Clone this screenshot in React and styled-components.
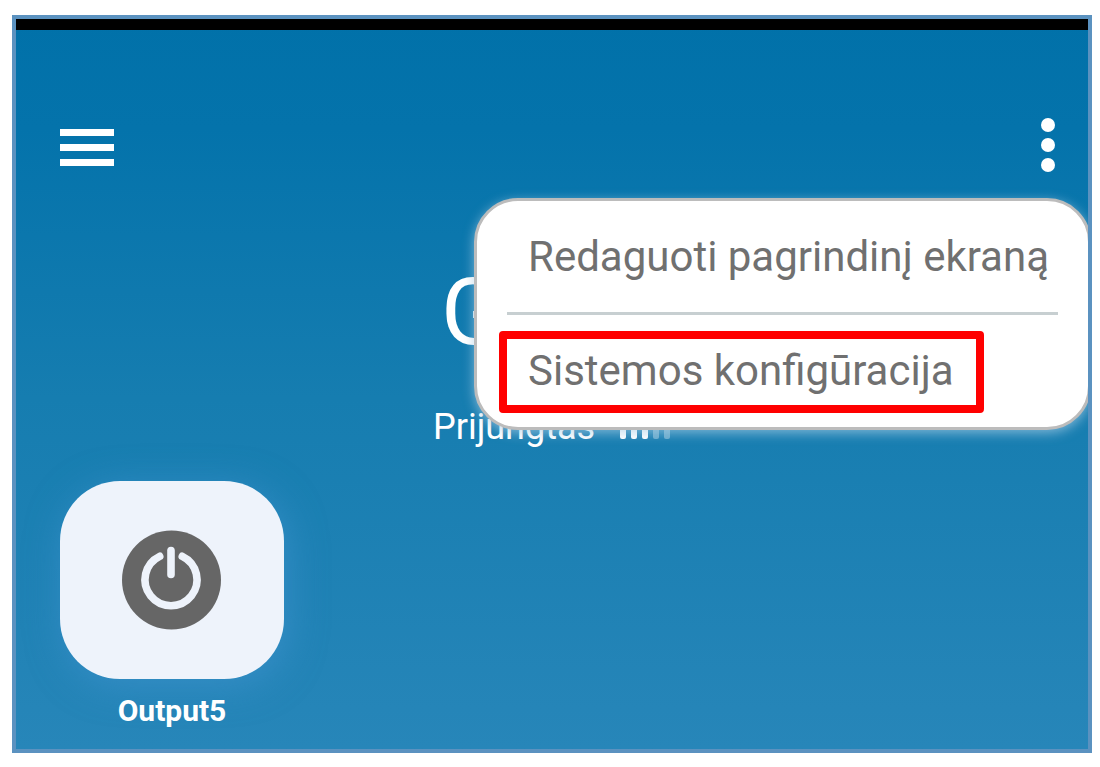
import React from "react";
import styled, { createGlobalStyle } from "styled-components";

const GlobalStyle = createGlobalStyle`
  * { box-sizing: border-box; }
  body { margin: 0; background: #fff; font-family: Roboto, sans-serif; }
  button { font: inherit; color: inherit; background: none; border: 0; padding: 0; cursor: pointer; }
`;

const Page = styled.div`
  min-height: 100vh;
  padding: 15px 8px 14px 12px;
  display: flex;
`;

const Screen = styled.main`
  flex: 1;
  position: relative;
  display: flex;
  flex-direction: column;
  overflow: hidden;
  border: 4px solid #5b92c0;
  color: #fff;
  background: linear-gradient(#0171a9 0%, #0473ab 15%, #167db0 52%, #2786b9 100%);
`;

const StatusBar = styled.div`
  height: 11px;
  flex: none;
  background: #000;
`;

const TopBar = styled.header`
  display: flex;
  justify-content: space-between;
  align-items: flex-start;
  padding: 88px 33px 0 44px;
`;

const MenuButton = styled.button`
  display: flex;
  flex-direction: column;
  gap: 8px;
  width: 54px;
  padding-top: 11px;
`;

const MenuLine = styled.span`
  height: 7px;
  background: #fff;
`;

const MoreButton = styled.button`
  display: flex;
  flex-direction: column;
  gap: 6px;
`;

const Dot = styled.span`
  width: 14px;
  height: 14px;
  border-radius: 50%;
  background: #fff;
`;

const Device = styled.section`
  display: flex;
  flex-direction: column;
  align-items: flex-start;
  width: 238px;
  margin: 87px auto 0;
`;

const DeviceName = styled.h1`
  margin: 0;
  padding-left: 8px;
  font-size: 92px;
  line-height: 108px;
  font-weight: 400;
`;

const Connection = styled.div`
  display: flex;
  align-items: center;
  gap: 24px;
  margin-top: 39px;
  font-size: 36px;
  line-height: 42px;
`;

const Signal = styled.svg`
  width: 54px;
  height: 24px;
`;

const Popover = styled.div`
  position: absolute;
  top: 179px;
  right: -3px;
  display: flex;
  flex-direction: column;
  padding: 20px 30px 14px;
  border: 3px solid #bcbcbc;
  border-radius: 44px;
  background: #fff;
  color: #707070;
  box-shadow: 0 3px 12px rgba(170, 205, 230, 0.7);
`;

const MenuItem = styled.button`
  align-self: flex-start;
  padding: 0 9px 0 21px;
  font-size: 42px;
  line-height: 72px;
  white-space: nowrap;
`;

const Divider = styled.hr`
  width: 100%;
  height: 3px;
  margin: 19px 0 16px;
  border: 0;
  background: #c7cfd1;
`;

const Highlight = styled.div`
  display: flex;
  align-self: flex-start;
  margin-left: -8px;
  border: 8px solid #f00;
  border-radius: 4px;

  ${MenuItem} {
    padding-right: 22px;
    padding-bottom: 2px;
    line-height: 64px;
  }
`;

const Outputs = styled.section`
  display: flex;
  padding: 33px 44px 20px;
`;

const Output = styled.button`
  display: flex;
  flex-direction: column;
  align-items: center;
  gap: 14px;
  font-size: 30px;
  line-height: 36px;
  font-weight: 700;
`;

const Tile = styled.span`
  display: grid;
  place-items: center;
  width: 224px;
  height: 198px;
  border-radius: 60px;
  background: #eef3fb;
  box-shadow: 4px 6px 36px rgba(66, 148, 208, 0.6);
`;

const PowerIcon = () => (
  <svg width="100" height="100" viewBox="0 0 100 100" aria-hidden="true">
    <circle cx="49.5" cy="50" r="49.5" fill="#666" />
    <g fill="none" stroke="#eef3fb" strokeWidth="7.6" strokeLinecap="round">
      <path d="M37.7 26.3A26 26 0 1 0 60.3 26.3" />
      <path d="M49 20.5V44.5" />
    </g>
  </svg>
);

const SignalIcon = () => (
  <Signal viewBox="0 0 54 24" aria-hidden="true">
    {[0, 11, 22, 33, 44].map((x, i) => (
      <rect key={x} x={x + 1} y={12 - i * 3} width="6" height={12 + i * 3} rx="2" fill="#fff" opacity={i < 3 ? 1 : 0.35} />
    ))}
  </Signal>
);

export default function App() {
  return (
    <Page>
      <GlobalStyle />
      <Screen>
        <StatusBar />
        <TopBar>
          <MenuButton aria-label="Meniu">
            <MenuLine />
            <MenuLine />
            <MenuLine />
          </MenuButton>
          <MoreButton aria-label="Daugiau">
            <Dot />
            <Dot />
            <Dot />
          </MoreButton>
        </TopBar>
        <Device>
          <DeviceName>G</DeviceName>
          <Connection>
            Prijungtas
            <SignalIcon />
          </Connection>
        </Device>
        <Outputs>
          <Output>
            <Tile>
              <PowerIcon />
            </Tile>
            Output5
          </Output>
        </Outputs>
        <Popover>
          <MenuItem>Redaguoti pagrindinį ekraną</MenuItem>
          <Divider />
          <Highlight>
            <MenuItem>Sistemos konfigūracija</MenuItem>
          </Highlight>
        </Popover>
      </Screen>
    </Page>
  );
}
